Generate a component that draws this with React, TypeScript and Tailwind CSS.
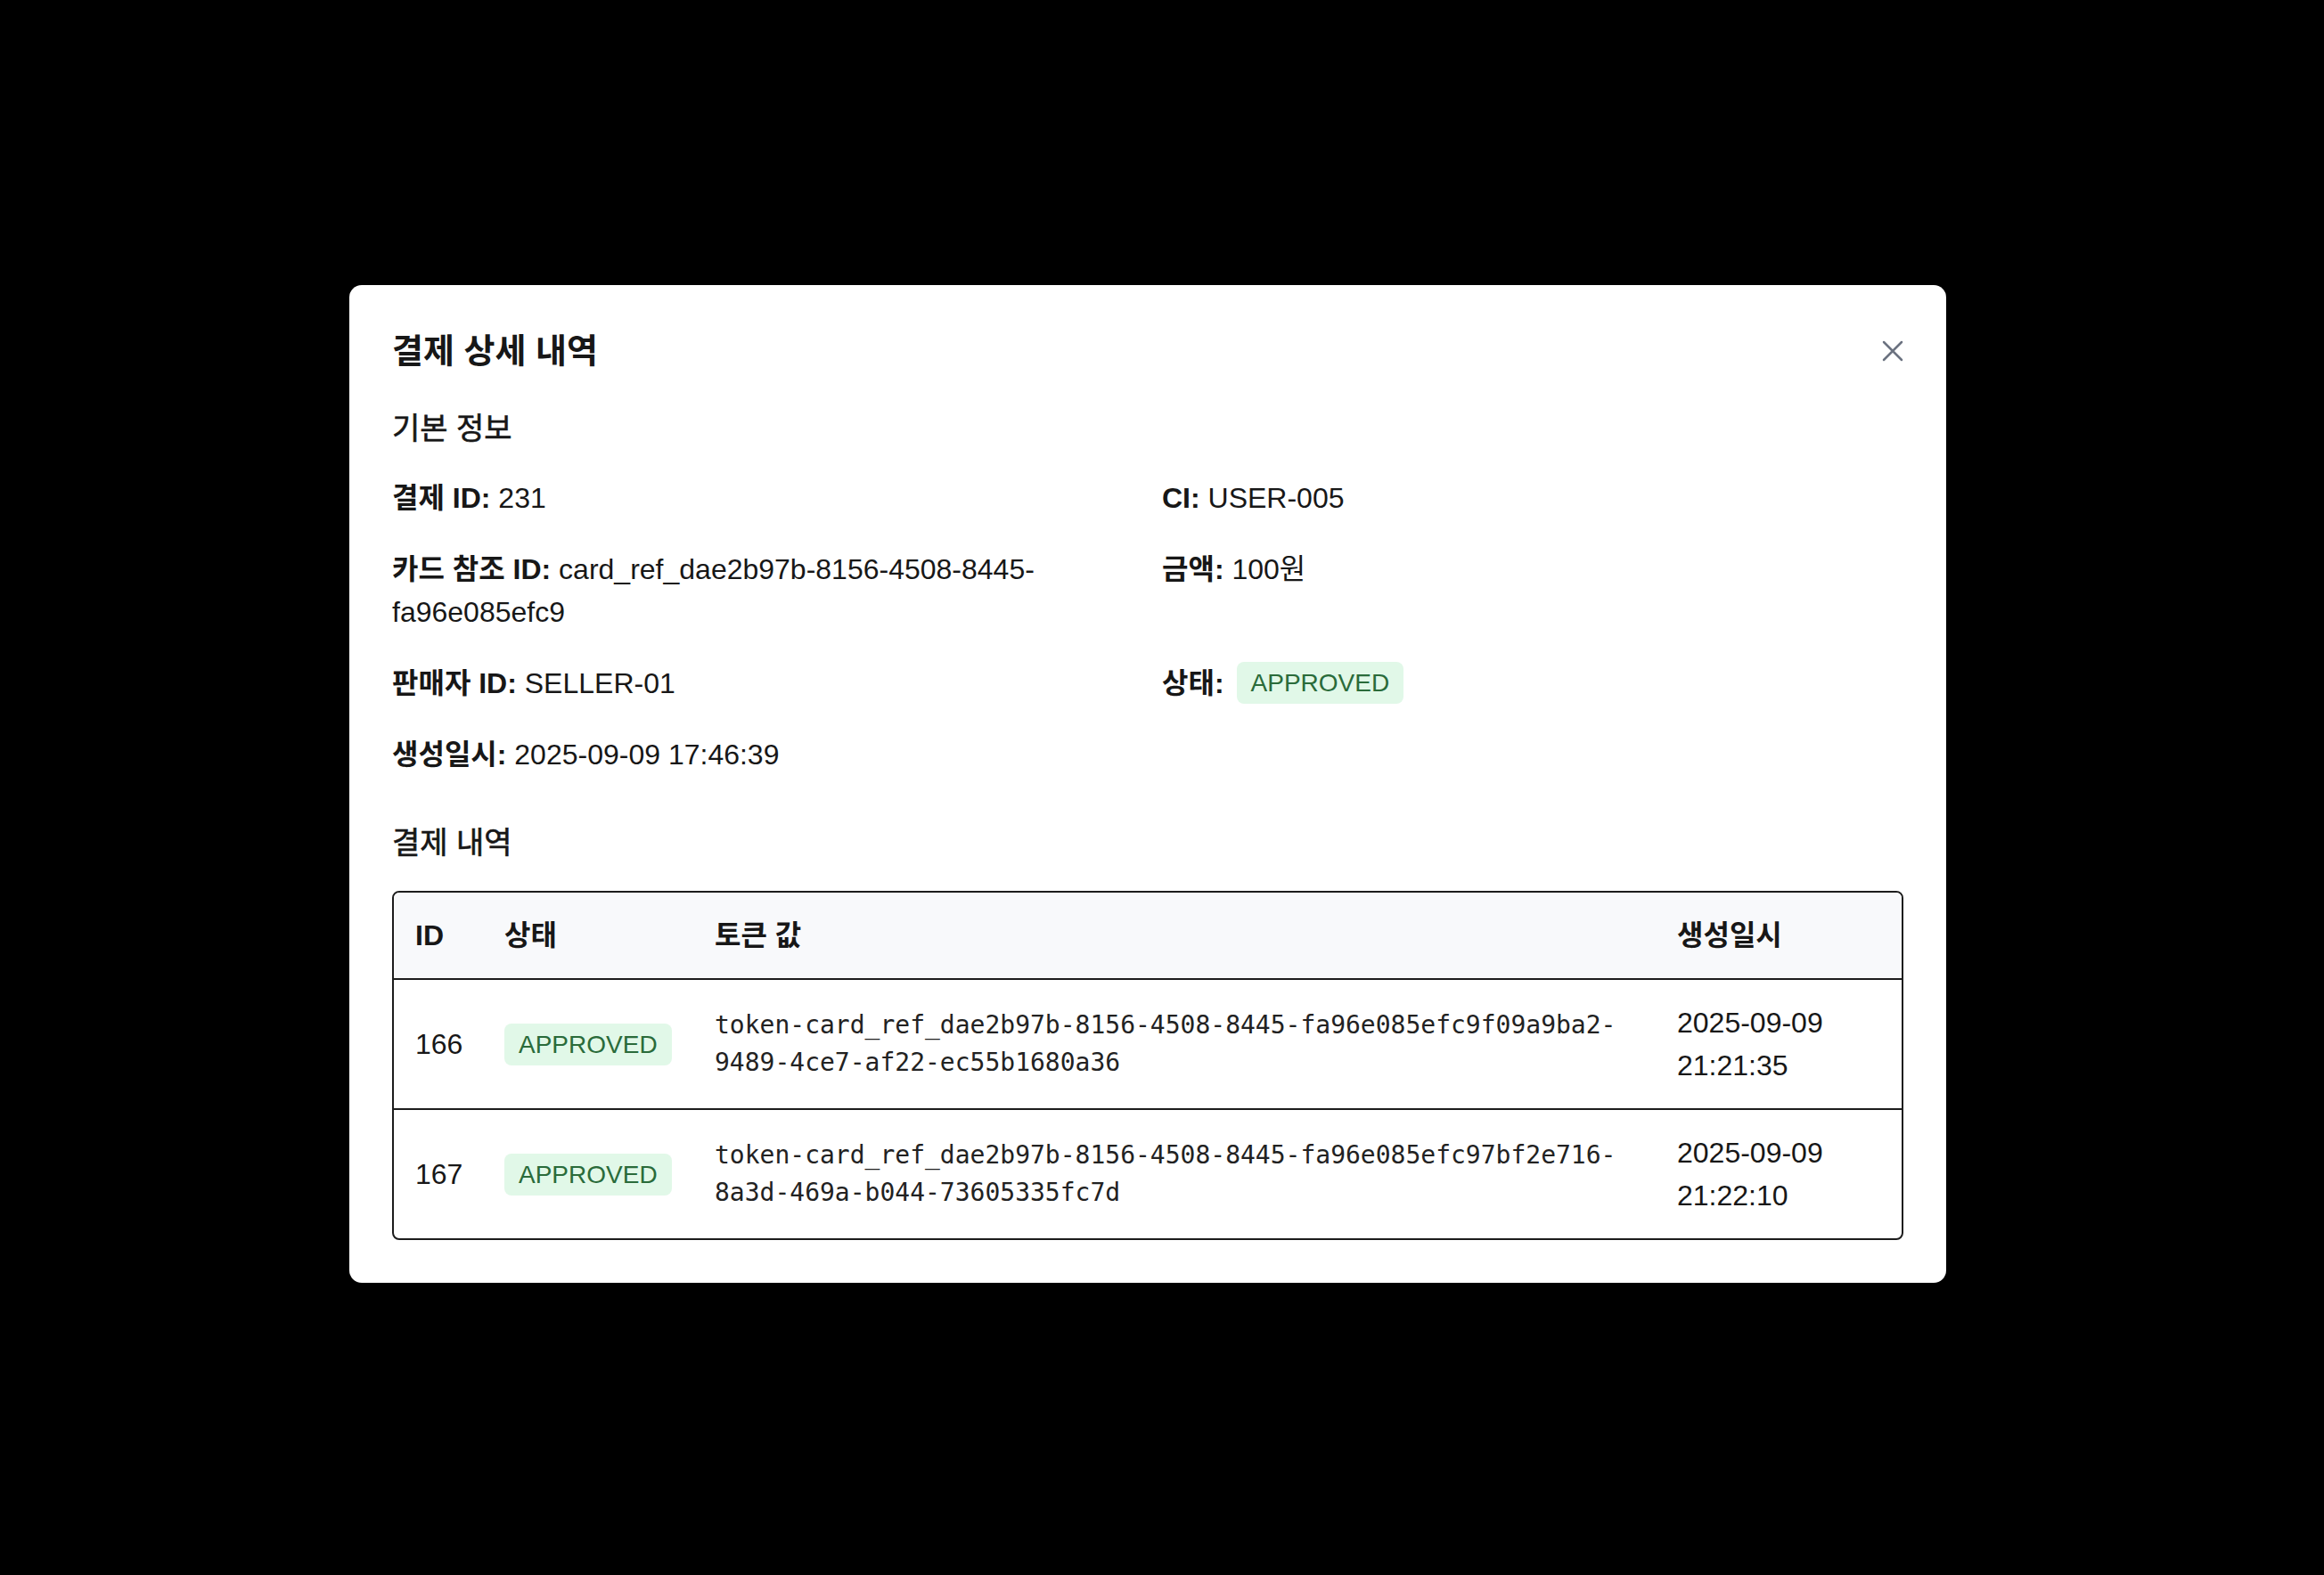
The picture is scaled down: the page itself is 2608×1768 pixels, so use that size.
import React from 'react';

const rows = [
  {
    id: 166,
    status: 'APPROVED',
    token: 'token-card_ref_dae2b97b-8156-4508-8445-fa96e085efc9f09a9ba2-9489-4ce7-af22-ec55b1680a36',
    date: '2025-09-09',
    time: '21:21:35',
  },
  {
    id: 167,
    status: 'APPROVED',
    token: 'token-card_ref_dae2b97b-8156-4508-8445-fa96e085efc97bf2e716-8a3d-469a-b044-73605335fc7d',
    date: '2025-09-09',
    time: '21:22:10',
  },
];

function Badge({ children }: { children: React.ReactNode }) {
  return (
    <span className="inline-block rounded-[8px] bg-[#e1f8e8] px-[16px] py-[4px] text-[28px] leading-[39px] text-[#2a6b3a]">
      {children}
    </span>
  );
}

function App() {
  return (
    <div
      className="min-h-screen bg-black flex items-center justify-center pr-[32px] pb-[9px] text-[#171717]"
      style={{ fontFamily: '"Liberation Sans", "Noto Sans CJK KR", sans-serif' }}
    >
      <div className="w-[1792px] bg-white rounded-[14px] p-[48px]">
        {/* Header */}
        <div className="flex items-center justify-between">
          <h1 className="text-[38px] leading-[52px] font-bold">결제 상세 내역</h1>
          <button className="text-[#6b7280]">
            <svg width="24" height="24" viewBox="0 0 24 24" fill="none" stroke="currentColor" strokeWidth="2.5" strokeLinecap="round">
              <path d="M2 2 L22 22 M22 2 L2 22" />
            </svg>
          </button>
        </div>

        {/* Basic info */}
        <h2 className="mt-[37px] mb-[30px] text-[34px] leading-[48px] [-webkit-text-stroke:0.6px_currentColor]">기본 정보</h2>
        <div className="grid grid-cols-2 gap-x-[32px] gap-y-[32px] text-[32px] leading-[48px]">
          <div>
            <span className="font-bold">결제 ID:</span> 231
          </div>
          <div>
            <span className="font-bold">CI:</span> USER-005
          </div>
          <div>
            <span className="font-bold">카드 참조 ID:</span> card_ref_dae2b97b-8156-4508-8445-fa96e085efc9
          </div>
          <div>
            <span className="font-bold">금액:</span> 100원
          </div>
          <div>
            <span className="font-bold">판매자 ID:</span> SELLER-01
          </div>
          <div className="flex items-center gap-[14px]">
            <span className="font-bold">상태:</span>
            <Badge>APPROVED</Badge>
          </div>
          <div>
            <span className="font-bold">생성일시:</span> 2025-09-09 17:46:39
          </div>
        </div>

        {/* Payment history */}
        <h2 className="mt-[51px] mb-[30px] text-[34px] leading-[48px] [-webkit-text-stroke:0.6px_currentColor]">결제 내역</h2>
        <div className="border-2 border-[#1c1c1c] rounded-[8px] overflow-hidden">
          <table className="w-full table-fixed border-collapse text-[32px] leading-[48px]">
            <colgroup>
              <col className="w-[100px]" />
              <col className="w-[236px]" />
              <col />
              <col className="w-[276px]" />
            </colgroup>
            <thead>
              <tr className="bg-[#f8f9fb] border-b-2 border-[#1c1c1c]">
                <th className="px-[24px] py-[24px] text-left font-bold">ID</th>
                <th className="px-[24px] py-[24px] text-left font-bold">상태</th>
                <th className="px-[24px] py-[24px] text-left font-bold">토큰 값</th>
                <th className="px-[24px] py-[24px] text-left font-bold">생성일시</th>
              </tr>
            </thead>
            <tbody>
              {rows.map((row, i) => (
                <tr key={row.id} className={i < rows.length - 1 ? 'border-b-2 border-[#1c1c1c]' : ''}>
                  <td className="px-[24px] py-[24px] align-middle">{row.id}</td>
                  <td className="px-[24px] py-[24px] align-middle">
                    <Badge>{row.status}</Badge>
                  </td>
                  <td
                    className="px-[24px] py-[24px] align-middle text-[28px] leading-[42px] text-[#222]"
                    style={{ fontFamily: '"DejaVu Sans Mono", monospace' }}
                  >
                    {row.token}
                  </td>
                  <td className="px-[24px] py-[24px] align-middle">
                    {row.date}
                    <br />
                    {row.time}
                  </td>
                </tr>
              ))}
            </tbody>
          </table>
        </div>
      </div>
    </div>
  );
}

export default App;
